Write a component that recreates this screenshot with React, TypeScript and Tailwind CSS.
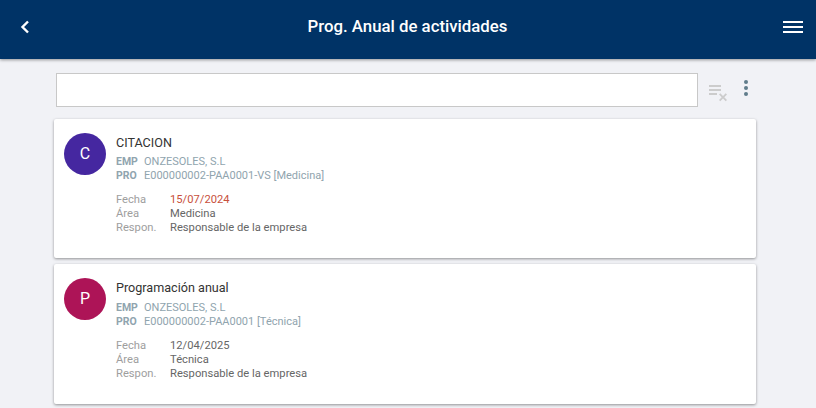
import React from "react";

interface Activity {
  initial: string;
  color: string;
  title: string;
  emp: string;
  pro: string;
  fecha: string;
  fechaClass: string;
  area: string;
  respon: string;
}

const activities: Activity[] = [
  {
    initial: "C",
    color: "bg-[#4527a0]",
    title: "CITACION",
    emp: "ONZESOLES, S.L",
    pro: "E000000002-PAA0001-VS [Medicina]",
    fecha: "15/07/2024",
    fechaClass: "text-[#c8503c]",
    area: "Medicina",
    respon: "Responsable de la empresa",
  },
  {
    initial: "P",
    color: "bg-[#ad1457]",
    title: "Programación anual",
    emp: "ONZESOLES, S.L",
    pro: "E000000002-PAA0001 [Técnica]",
    fecha: "12/04/2025",
    fechaClass: "text-[#666666]",
    area: "Técnica",
    respon: "Responsable de la empresa",
  },
];

const ActivityCard = ({ item }: { item: Activity }) => (
  <div className="flex h-[139.4px] rounded-[2px] bg-white pl-[10px] pt-[14px] shadow-[0_1px_3px_rgba(0,0,0,0.4)]">
    <div
      className={`flex h-[42px] w-[42px] shrink-0 items-center justify-center rounded-full text-[16px] text-white ${item.color}`}
    >
      {item.initial}
    </div>
    <div className="ml-[10px] flex flex-col">
      <div className="text-[12.6px] leading-[20px] text-[#333333]">{item.title}</div>
      <div className="mt-[2.4px] text-[11px] leading-[14px] text-[#90a4ae]">
        <div className="flex">
          <span className="w-[28px] text-[10.5px] font-bold">EMP</span>
          <span>{item.emp}</span>
        </div>
        <div className="flex">
          <span className="w-[28px] text-[10.5px] font-bold">PRO</span>
          <span>{item.pro}</span>
        </div>
      </div>
      <div className="mt-[10px] grid grid-cols-[54px_auto] text-[11.2px] leading-[14px]">
        <span className="text-[#9e9e9e]">Fecha</span>
        <span className={item.fechaClass}>{item.fecha}</span>
        <span className="text-[#9e9e9e]">Área</span>
        <span className="text-[#666666]">{item.area}</span>
        <span className="text-[#9e9e9e]">Respon.</span>
        <span className="text-[#666666]">{item.respon}</span>
      </div>
    </div>
  </div>
);

export default function App() {
  return (
    <div className="flex h-[408px] flex-col overflow-hidden bg-[#f1f2f6] font-['Roboto',sans-serif]">
      <header className="flex h-[59px] shrink-0 items-center justify-between bg-[#003366] pb-[5px] pl-[20px] pr-[13px] shadow-[0_1px_3px_rgba(0,0,0,0.4)]">
        <svg width="10" height="14" viewBox="0 0 10 14" fill="none">
          <path d="M8 1.5 2.5 7 8 12.5" stroke="white" strokeWidth="2.4" />
        </svg>
        <h1 className="ml-[2px] text-[16.8px] font-medium text-white">Prog. Anual de actividades</h1>
        <svg width="20" height="12" viewBox="0 0 20 12" fill="white">
          <rect y="0" width="20" height="2" />
          <rect y="5" width="20" height="2" />
          <rect y="10" width="20" height="2" />
        </svg>
      </header>
      <div className="mt-[14px] flex h-[34px] shrink-0 items-start pl-[56px]">
        <input className="h-[34px] w-[642px] border border-[#c8c8c8] bg-white outline-none" />
        <svg className="ml-[10px] mt-[11px]" width="20" height="18" viewBox="0 0 20 18" fill="#cccccc">
          <rect x="1" y="1" width="12" height="2" />
          <rect x="1" y="5" width="12" height="2" />
          <rect x="1" y="9" width="8" height="2" />
          <path d="M11 10.5 12.3 9.2 15 11.9 17.7 9.2 19 10.5 16.3 13.2 19 15.9 17.7 17.2 15 14.5 12.3 17.2 11 15.9 13.7 13.2Z" />
        </svg>
        <svg className="ml-[15px] mt-[7px]" width="6" height="16" viewBox="0 0 6 16" fill="#607d8b">
          <circle cx="3" cy="2" r="2" />
          <circle cx="3" cy="8" r="2" />
          <circle cx="3" cy="14" r="2" />
        </svg>
      </div>
      <main className="ml-[54px] mt-[12px] flex w-[702px] flex-col gap-[6px] self-start">
        {activities.map((item) => (
          <ActivityCard key={item.title} item={item} />
        ))}
      </main>
    </div>
  );
}
